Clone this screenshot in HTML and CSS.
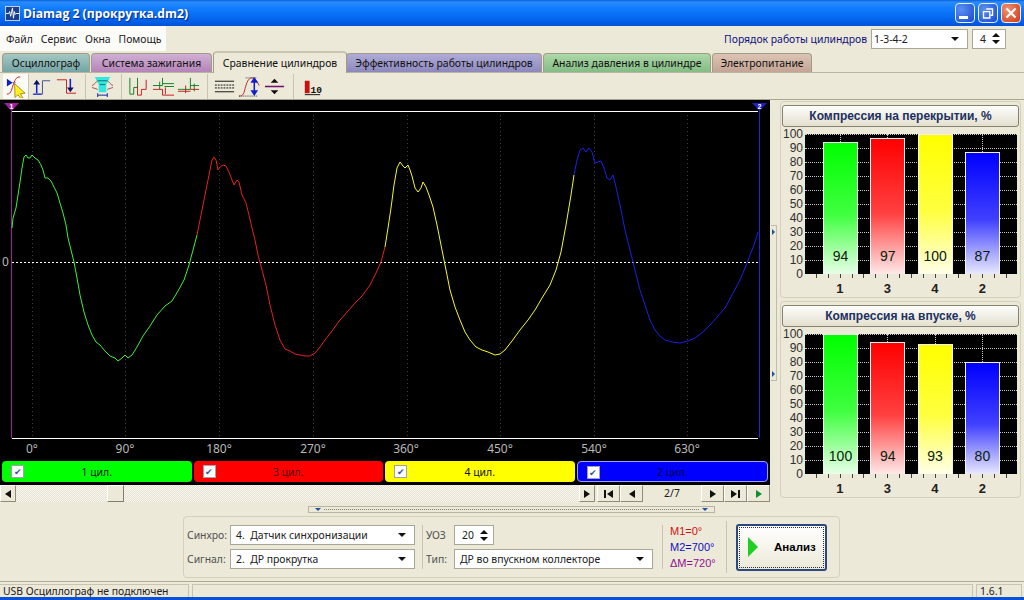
FILE: index.html
```html
<!DOCTYPE html>
<html lang="ru">
<head>
    <meta charset="UTF-8">
    <title>Diamag 2</title>
    <link rel="stylesheet" href="styles.css">
</head>
<body>
    <!-- заголовок окна -->
    <div class="titlebar">
        <svg class="app-icon" viewBox="0 0 16 16">
            <rect x="0.5" y="0.5" width="15" height="15" fill="#1a3f8f" stroke="#c8d8f0"/>
            <path d="M1 8h3l1-2 1 5 2-9 1 11 1-7 1 3 1-1h3" fill="none" stroke="#fff"/>
        </svg>
        <span class="title-text">Diamag 2 (прокрутка.dm2)</span>
        <div class="win-buttons">
            <div class="win-btn"><span class="win-min"></span></div>
            <div class="win-btn">
                <svg viewBox="0 0 20 20" width="20" height="20"><path d="M8 5.5h7v7h-2M5 8.5h7v7H5z" fill="none" stroke="#fff" stroke-width="1.5"/></svg>
            </div>
            <div class="win-btn win-close">
                <svg viewBox="0 0 20 20" width="20" height="20"><path d="M5 5l10 10M15 5L5 15" stroke="#fff" stroke-width="2.4"/></svg>
            </div>
        </div>
    </div>

    <!-- меню и порядок работы -->
    <div class="menu-row">
        <div class="menu">
            <span>Файл</span><span>Сервис</span><span>Окна</span><span>Помощь</span>
        </div>
        <div class="order">
            <span class="order-label">Порядок работы цилиндров</span>
            <div class="combo combo-order"><span>1-3-4-2</span><i class="arrow-down"></i></div>
            <div class="spin spin-order"><span>4</span><b class="spin-arrows"><i></i><i></i></b></div>
        </div>
    </div>

    <!-- вкладки -->
    <div class="tabs">
        <div class="tab tab-osc">Осциллограф</div>
        <div class="tab tab-ign">Система зажигания</div>
        <div class="tab tab-active">Сравнение цилиндров</div>
        <div class="tab tab-eff">Эффективность работы цилиндров</div>
        <div class="tab tab-press">Анализ давления в цилиндре</div>
        <div class="tab tab-power">Электропитание</div>
    </div>

    <!-- панель инструментов -->
    <div class="toolbar">
        <div class="tool-group">
            <div class="tool tool-pressed">
                <svg viewBox="0 0 24 24"><path d="M3 4v8l6-4z" fill="#1020c0"/><path d="M9 8h3" stroke="#1020c0" stroke-dasharray="1 1"/><path d="M3 20c5 0 5-6 7-11s3-7 7-7" fill="none" stroke="#c02020"/><path d="M11 9l11 10-5 .5 2.500 4-2 1-3-4-3 3z" fill="#fff020" stroke="#806000" stroke-width=".7"/></svg>
            </div>
        </div>
        <div class="tool-group">
            <div class="tool">
                <svg viewBox="0 0 24 24"><path d="M4 20h9V6h8" fill="none" stroke="#405090"/><path d="M7 19V9" stroke="#1020d0" stroke-width="1.6"/><path d="M3.500 10L7 5l3.500 5z" fill="#101060"/><path d="M3 20h9" stroke="#1020d0"/></svg>
            </div>
            <div class="tool">
                <svg viewBox="0 0 24 24"><path d="M2 5h10v14h10" fill="none" stroke="#c02020"/><path d="M16 4v10" stroke="#1020d0" stroke-width="1.6"/><path d="M12.500 13l3.500 5 3.500-5z" fill="#101060"/></svg>
            </div>
        </div>
        <div class="tool-group tool-group-next">
            <div class="tool">
                <svg viewBox="0 0 24 24"><path d="M4 2h16l-4 8v8H8v-8z" fill="#30e8e0"/><path d="M1 11c3-1 4-4 6-5M23 11c-3-1-4-4-6-5M1 13l6 2M23 13l-6 2" fill="none" stroke="#a05050"/><path d="M7 6h10M9 10h6" stroke="#107070"/><path d="M7 21h10M7 19v4M17 19v4" stroke="#1020a0"/></svg>
            </div>
        </div>
        <div class="tool-group tool-group-next">
            <div class="tool">
                <svg viewBox="0 0 24 24"><path d="M3 3v17h4v-7h4V3" fill="none" stroke="#108020"/><path d="M11 11v10h4v-6h5V5" fill="none" stroke="#c02020"/></svg>
            </div>
            <div class="tool">
                <svg viewBox="0 0 24 24"><path d="M1 11h10V3M11 9h12M8 7v8M13 12h10" fill="none" stroke="#108020"/><path d="M1 15h10v6h12M14 13v7" fill="none" stroke="#c02020"/></svg>
            </div>
            <div class="tool">
                <svg viewBox="0 0 24 24"><path d="M1 15h13V3M14 11h9M18 9v8" fill="none" stroke="#108020"/><path d="M1 17h13M9 11v8M14 15h9" fill="none" stroke="#c02020"/></svg>
            </div>
        </div>
        <div class="tool-group tool-group-next">
            <div class="tool">
                <svg viewBox="0 0 24 24"><path d="M2 6.500h20M2 17.500h20" stroke="#101010"/><path d="M2 10.500h20M2 13.500h20" stroke="#101010" stroke-dasharray="2 1"/></svg>
            </div>
            <div class="tool">
                <svg viewBox="0 0 24 24"><path d="M1 22c5 0 5-3 7-10s4-9 7-9 5 4 7 8" fill="none" stroke="#c02020"/><path d="M8 3h12M1 22h19" stroke="#404040" stroke-dasharray="1 1"/><path d="M17 6v12" stroke="#1020d0" stroke-width="1.6"/><path d="M13 8l4-6 4 6zM13 16l4 6 4-6z" fill="#1020d0"/></svg>
            </div>
            <div class="tool">
                <svg viewBox="0 0 24 24"><path d="M2 12h20" stroke="#701070" stroke-width="1.6"/><path d="M8 8l4-4 4 4zM8 16l4 4 4-4z" fill="#101010"/></svg>
            </div>
        </div>
        <div class="tool-group tool-group-last">
            <div class="tool">
                <svg viewBox="0 0 24 24"><rect x="5" y="6" width="5" height="13" fill="#c81010"/><path d="M5 20.500h16" stroke="#101010"/><text x="11" y="19" class="tool-num">10</text></svg>
            </div>
        </div>
    </div>

    <div class="workspace">
        <div class="scope-col">
            <!-- осциллограмма -->
            <svg class="plot" viewBox="0 100 770 359">
                <g class="grid-v">
                    <path d="M32.500 111V438M125.500 111V438M219.500 111V438M313.500 111V438M407.500 111V438M500.500 111V438M594.500 111V438M687.500 111V438"/>
                </g>
                <path d="M12 111.500H758M12 438.500H758" stroke="#fff" stroke-width="1" fill="none"/>
                <path d="M12 262.500H758" stroke="#fff" stroke-dasharray="2 2" fill="none"/>
                <path d="M11.500 104V438" stroke="#a020a0" fill="none"/>
                <path d="M759.500 104V438" stroke="#2020e0" fill="none"/>
                <path d="M4 103H19L11.500 111z" fill="#a020a0"/>
                <path d="M752 103H767L759.500 111z" fill="#2020c0"/>
                <text x="11.500" y="109" class="marker">1</text>
                <text x="759.500" y="109" class="marker">2</text>
                <text x="2" y="266" class="axis-text">0</text>
                <polyline class="trace" stroke="#3cf03c" points="12,228 13,218 16,208 18,195 20,182 22,168 24,157 26,155 28,158 30,158 32,155 35,158 38,160 41,165 43,170 45,178 48,178 51,181 54,187 57,193 60,203 63,213 66,225 68,238 71,250 74,262 77,278 80,295 84,312 88,325 92,335 96,342 100,345 105,351 110,356 115,358 118,361 122,358 125,355 128,358 132,355 137,347 143,336 150,326 157,315 165,306 172,301 178,291 184,280 189,265 193,250 197,235"/>
                <polyline class="trace" stroke="#e82020" points="197,235 200,220 203,205 206,190 209,175 212,160 214,157 216,160 218,170 220,167 223,165 226,166 229,172 232,180 234,185 237,180 239,182 242,195 246,203 249,215 252,228 255,240 258,255 262,270 266,285 270,305 275,325 280,340 285,349 290,351 295,354 300,355 305,356 310,356 315,353 320,347 325,340 332,331 340,320 348,311 355,303 362,296 370,285 376,273 381,262 385,247"/>
                <polyline class="trace" stroke="#f8f820" points="385,247 388,228 391,208 394,185 397,168 400,162 403,166 405,168 408,165 410,170 412,176 415,188 418,192 421,188 423,182 426,187 429,195 433,207 437,225 441,245 445,265 450,290 455,307 460,320 465,332 470,340 476,347 482,350 488,352 495,355 500,354 505,350 512,341 520,330 528,320 535,310 542,298 550,285 556,270 561,252 566,225 571,195 574,175"/>
                <polyline class="trace" stroke="#1c20e8" points="574,175 577,160 580,150 583,148 586,152 589,148 592,152 595,163 598,162 601,161 604,168 607,178 610,180 613,175 616,187 620,205 625,230 630,250 635,270 640,290 645,305 650,320 655,330 660,336 665,340 672,342 680,343 688,341 695,338 703,332 710,325 718,316 725,308 732,295 740,280 745,268 750,255 754,245 758,232"/>
                <g class="axis-text axis-deg">
                    <text x="32" y="453">0°</text>
                    <text x="125" y="453">90°</text>
                    <text x="219" y="453">180°</text>
                    <text x="313" y="453">270°</text>
                    <text x="406" y="453">360°</text>
                    <text x="500" y="453">450°</text>
                    <text x="594" y="453">540°</text>
                    <text x="687" y="453">630°</text>
                </g>
            </svg>

            <!-- цилиндры -->
            <div class="channels">
                <div class="channel ch-green"><span class="check">✔</span><span class="ch-name">1 цил.</span></div>
                <div class="channel ch-red"><span class="check">✔</span><span class="ch-name">3 цил.</span></div>
                <div class="channel ch-yellow"><span class="check">✔</span><span class="ch-name">4 цил.</span></div>
                <div class="channel ch-blue"><span class="check">✔</span><span class="ch-name">2 цил.</span></div>
            </div>

            <!-- прокрутка и навигация -->
            <div class="scroll-row">
                <div class="nav-btn nav-small"><i class="tri-left"></i></div>
                <div class="scroll-track"><div class="scroll-thumb"></div></div>
                <div class="nav-btn nav-small"><i class="tri-right"></i></div>
                <div class="nav-btn nav-gap"><i class="bar"></i><i class="tri-left"></i></div>
                <div class="nav-btn"><i class="tri-left"></i></div>
                <div class="page-num">2/7</div>
                <div class="nav-btn"><i class="tri-right"></i></div>
                <div class="nav-btn"><i class="tri-right"></i><i class="bar"></i></div>
                <div class="nav-btn"><i class="tri-right tri-green"></i></div>
            </div>
        </div>

        <div class="side-handle"><i class="tri-mini"></i><i class="tri-mini"></i></div>

        <!-- столбцы компрессии -->
        <div class="side-col">
            <div class="group-box">
                <div class="chart-title">Компрессия на перекрытии, %</div>
                <div class="chart-wrap">
                    <div class="axis-y"><span>100</span><span>90</span><span>80</span><span>70</span><span>60</span><span>50</span><span>40</span><span>30</span><span>20</span><span>10</span><span>0</span></div>
                    <div class="chart">
                        <div class="chart-grid"><i></i><i></i><i></i><i></i><i></i><i></i><i></i><i></i><i></i><i></i></div>
                        <div class="chart-bars">
                            <div class="slot"><div class="bar-col bar-green" style="height: 94%"><span>94</span></div></div>
                            <div class="slot"><div class="bar-col bar-red" style="height: 97%"><span>97</span></div></div>
                            <div class="slot"><div class="bar-col bar-yellow" style="height: 100%"><span>100</span></div></div>
                            <div class="slot"><div class="bar-col bar-blue" style="height: 87%"><span>87</span></div></div>
                        </div>
                    </div>
                </div>
                <div class="axis-x"><span>1</span><span>3</span><span>4</span><span>2</span></div>
            </div>
            <div class="group-box">
                <div class="chart-title">Компрессия на впуске, %</div>
                <div class="chart-wrap">
                    <div class="axis-y"><span>100</span><span>90</span><span>80</span><span>70</span><span>60</span><span>50</span><span>40</span><span>30</span><span>20</span><span>10</span><span>0</span></div>
                    <div class="chart">
                        <div class="chart-grid"><i></i><i></i><i></i><i></i><i></i><i></i><i></i><i></i><i></i><i></i></div>
                        <div class="chart-bars">
                            <div class="slot"><div class="bar-col bar-green" style="height: 100%"><span>100</span></div></div>
                            <div class="slot"><div class="bar-col bar-red" style="height: 94%"><span>94</span></div></div>
                            <div class="slot"><div class="bar-col bar-yellow" style="height: 93%"><span>93</span></div></div>
                            <div class="slot"><div class="bar-col bar-blue" style="height: 80%"><span>80</span></div></div>
                        </div>
                    </div>
                </div>
                <div class="axis-x"><span>1</span><span>3</span><span>4</span><span>2</span></div>
            </div>
        </div>
    </div>

    <div class="splitter"><i class="tri-mini-down"></i><span class="splitter-dots"></span><i class="tri-mini-down"></i></div>

    <!-- параметры анализа -->
    <div class="controls-row">
        <div class="controls">
            <div class="sel-col">
                <div class="field">
                    <label>Синхро:</label>
                    <div class="combo combo-sel"><span>4.&nbsp; Датчик синхронизации</span><i class="arrow-down"></i></div>
                </div>
                <div class="field">
                    <label>Сигнал:</label>
                    <div class="combo combo-sel"><span>2.&nbsp; ДР прокрутка</span><i class="arrow-down"></i></div>
                </div>
            </div>
            <div class="sel-col sel-col-second">
                <div class="field">
                    <label class="label-short">УОЗ</label>
                    <div class="spin spin-uoz"><span>20</span><b class="spin-arrows"><i></i><i></i></b></div>
                </div>
                <div class="field">
                    <label class="label-short">Тип:</label>
                    <div class="combo combo-type"><span>ДР во впускном коллекторе</span><i class="arrow-down"></i></div>
                </div>
            </div>
            <div class="markers">
                <span class="m1">M1=0°</span>
                <span class="m2">M2=700°</span>
                <span class="m3">ΔM=720°</span>
            </div>
            <div class="analyze-btn">
                <i class="analyze-tri"></i>
                <span>Анализ</span>
            </div>
        </div>
    </div>

    <!-- строка состояния -->
    <div class="statusbar">
        <div class="status-cell status-usb">USB Осциллограф не подключен</div>
        <div class="status-cell status-mid"></div>
        <div class="status-cell status-ver">1.6.1</div>
    </div>
</body>
</html>
```

FILE: styles.css
```css
* {
    box-sizing: border-box;
}

body {
    margin: 0;
    width: 1024px;
    height: 600px;
    overflow: hidden;
    display: flex;
    flex-direction: column;
    background: #ece9d8;
    color: #202020;
    font-family: "Noto Sans", sans-serif;
    font-size: 10.400px;
    border-bottom: 3px solid #0a50d8;
}

i {
    display: block;
}

/* заголовок окна */
.titlebar {
    height: 26px;
    flex: none;
    display: flex;
    align-items: center;
    padding: 0 3px 0 5px;
    background: linear-gradient(#0a60e0 0, #2a8cf8 8%, #127dff 30%, #0468f0 70%, #0058e0 92%, #0a50d8 100%);
}

.app-icon {
    width: 15px;
    height: 15px;
    margin-right: 3px;
}

.title-text {
    color: #fff;
    font-family: "Open Sans", sans-serif;
    font-weight: 700;
    font-size: 12.200px;
    text-shadow: 1px 1px 1px #0a2a80;
}

.win-buttons {
    margin-left: auto;
    display: flex;
    gap: 3px;
}

.win-btn {
    width: 20px;
    height: 20px;
    border: 1px solid #e8f0ff;
    border-radius: 4px;
    background: radial-gradient(circle at 30% 30%, #5a90f0, #1848d0);
    display: flex;
    align-items: center;
    justify-content: center;
}

.win-close {
    background: radial-gradient(circle at 30% 30%, #f09070, #d03810);
}

.win-min {
    width: 9px;
    height: 3px;
    background: #fff;
    margin: 9px 0 0 -4px;
}

/* меню */
.menu-row {
    height: 25px;
    flex: none;
    display: flex;
    align-items: center;
    justify-content: space-between;
}

.menu {
    width: 166px;
    height: 25px;
    background: #fbfbf8;
    display: flex;
    align-items: center;
    gap: 8px;
    padding-left: 6px;
}

.order {
    display: flex;
    align-items: center;
    padding-right: 18px;
}

.order-label {
    color: #101080;
    margin-right: 4px;
}

.combo {
    height: 20px;
    background: #fff;
    border: 1px solid #a8a898;
    display: flex;
    align-items: center;
    justify-content: space-between;
    padding: 0 8px 0 2px;
}

.combo-order {
    width: 97px;
}

.combo-sel {
    width: 185px;
    padding-left: 5px;
}

.combo-type {
    width: 199px;
    padding-left: 5px;
}

.arrow-down {
    width: 0;
    height: 0;
    border: 4px solid transparent;
    border-top: 4px solid #101010;
    border-bottom: 0;
}

.spin {
    height: 20px;
    background: #fff;
    border: 1px solid #a8a898;
    display: flex;
    align-items: center;
    justify-content: space-between;
    padding: 0 5px 0 7px;
}

.spin-order {
    width: 34px;
    margin-left: 4px;
}

.spin-uoz {
    width: 40px;
}

.spin-arrows {
    display: flex;
    flex-direction: column;
    gap: 3px;
}

.spin-arrows i {
    width: 0;
    height: 0;
    border: 4px solid transparent;
    border-bottom: 4px solid #101010;
    border-top: 0;
}

.spin-arrows i:last-child {
    border-top: 4px solid #101010;
    border-bottom: 0;
}

/* вкладки */
.tabs {
    height: 22px;
    flex: none;
    display: flex;
    align-items: flex-end;
    padding-left: 2px;
    border-bottom: 1px solid #b8b4a0;
}

.tab {
    height: 19px;
    display: flex;
    align-items: center;
    justify-content: center;
    border: 1px solid #a09c88;
    border-bottom: 0;
    border-radius: 4px 4px 0 0;
    margin-right: 1px;
    color: #101010;
}

.tab-osc {
    width: 88px;
    background: linear-gradient(#a4c8c4, #74a4a4);
}

.tab-ign {
    width: 121px;
    background: linear-gradient(#d0b0d4, #b484b8);
}

.tab-active {
    width: 134px;
    height: 22px;
    margin: 0 -1px 0 0;
    background: #ece9d8;
    position: relative;
    top: 1px;
    border-top: 2px solid #c8c4b0;
}

.tab-eff {
    width: 196px;
    background: linear-gradient(#b0acd8, #8c88bc);
}

.tab-press {
    width: 168px;
    background: linear-gradient(#acd8a8, #84bc84);
}

.tab-power {
    width: 100px;
    background: linear-gradient(#dcc4b4, #c4a494);
}

/* инструменты */
.toolbar {
    height: 27px;
    flex: none;
    display: flex;
    align-items: center;
    padding-left: 3px;
    border-bottom: 1px solid #a8a490;
}

.tool-group {
    display: flex;
    height: 25px;
    padding-right: 6px;
    border-right: 1px solid #c8c4b0;
}

.tool-group:first-child {
    padding-right: 0;
    margin-right: 0;
}

.tool-group-next {
    margin-left: 4px;
}

.tool-group-last {
    margin-left: 5px;
    border-right: 0;
}

.tool {
    width: 25px;
    height: 25px;
    padding: 1px;
}

.tool svg {
    display: block;
    width: 23px;
    height: 23px;
}

.tool-pressed {
    background: #fbfaf4;
}

.tool-num {
    font-family: "Liberation Mono", monospace;
    font-weight: 700;
    font-size: 10px;
    fill: #101010;
}

/* рабочая область */
.workspace {
    height: 403px;
    flex: none;
    display: flex;
}

.scope-col {
    width: 770px;
    display: flex;
    flex-direction: column;
}

.plot {
    display: block;
    width: 770px;
    height: 359px;
    background: #000;
}

.grid-v path {
    stroke: #3c3c3c;
    stroke-dasharray: 1 3;
    fill: none;
}

.marker {
    fill: #fff;
    font-family: "Liberation Sans", sans-serif;
    font-size: 7px;
    font-weight: 700;
    text-anchor: middle;
}

.axis-text {
    fill: #b8b8b8;
    font-family: "Noto Sans", sans-serif;
    font-size: 12px;
}

.axis-deg {
    text-anchor: middle;
}

.trace {
    fill: none;
    stroke-width: 1;
}

/* цилиндры */
.channels {
    height: 26px;
    flex: none;
    display: flex;
    gap: 2px;
    padding: 2px 2px 3px;
    background: #000;
}

.channel {
    flex: 1;
    position: relative;
    border-radius: 4px;
    display: flex;
    align-items: center;
    justify-content: center;
    color: #101010;
}

.ch-green {
    background: #00ff00;
}

.ch-red {
    background: #ff0000;
    color: #500000;
}

.ch-yellow {
    background: #ffff00;
}

.ch-blue {
    background: #0000ff;
    border: 1px solid #a0a0f0;
    color: #000050;
}

.check {
    position: absolute;
    left: 9px;
    top: 4px;
    width: 13px;
    height: 13px;
    background: #fff;
    border: 1px solid #a0a0b0;
    color: #3858a0;
    font-size: 9px;
    line-height: 11px;
    text-align: center;
}

/* прокрутка */
.scroll-row {
    height: 17px;
    flex: none;
    display: flex;
}

.scroll-track {
    flex: 1;
    padding-left: 91px;
    background: repeating-conic-gradient(#f8f6ee 0 25%, #e6e3d4 0 50%) 0 0 / 2px 2px;
}

.scroll-thumb {
    width: 17px;
    height: 17px;
    background: #ece9d8;
    border: 1px solid;
    border-color: #fff #808070 #808070 #fff;
}

.nav-btn {
    width: 23px;
    height: 17px;
    display: flex;
    align-items: center;
    justify-content: center;
    gap: 1px;
    background: #ece9d8;
    border: 1px solid;
    border-color: #fff #908c78 #908c78 #fff;
}

.nav-small {
    width: 16px;
}

.nav-gap {
    margin-left: 2px;
}

.page-num {
    width: 58px;
    text-align: center;
    line-height: 17px;
}

.tri-left,
.tri-right {
    width: 0;
    height: 0;
    border: 4px solid transparent;
    border-left: 0;
    border-right: 6px solid #101010;
}

.tri-right {
    border-right: 0;
    border-left: 6px solid #101010;
}

.tri-green {
    border-left-color: #109030;
}

.bar {
    width: 2px;
    height: 8px;
    background: #101010;
}

/* ручка боковой панели */
.side-handle {
    width: 6px;
    height: 156px;
    margin: 125px 0 0 1px;
    display: flex;
    flex-direction: column;
    justify-content: space-between;
    padding: 3px 0;
    border: 1px solid #c0bca8;
    border-left: 0;
}

.tri-mini {
    width: 0;
    height: 0;
    border: 3px solid transparent;
    border-right: 0;
    border-left: 3px solid #2050a0;
    margin-left: 1px;
}

/* столбцы */
.side-col {
    width: 241px;
    margin-left: 3px;
    padding-top: 1px;
    display: flex;
    flex-direction: column;
    gap: 3px;
}

.group-box {
    height: 197px;
    border: 1px solid #d4d0bc;
    border-radius: 4px;
    padding: 3px 1px 0;
}

.chart-title {
    height: 22px;
    border: 1px solid #85826e;
    border-radius: 3px;
    background: linear-gradient(#fdfdfb, #e4e0cf);
    color: #203060;
    font-family: "Liberation Sans", sans-serif;
    font-weight: 700;
    font-size: 12px;
    line-height: 20px;
    text-align: center;
}

.chart-wrap {
    display: flex;
    margin-top: 7px;
}

.axis-y {
    width: 23px;
    height: 140px;
    display: flex;
    flex-direction: column;
    margin-top: -7px;
    padding-right: 2px;
    text-align: right;
    font-family: "Liberation Sans", sans-serif;
    font-size: 12px;
    color: #303030;
}

.axis-y span {
    flex: none;
    height: 14px;
    line-height: 14px;
}

.chart {
    position: relative;
    width: 212px;
    height: 140px;
    background: #000;
}

.chart-grid {
    position: absolute;
    inset: 0;
    display: flex;
    flex-direction: column;
}

.chart-grid i {
    flex: 1;
    border-top: 1px dotted #c8c8c8;
}

.chart-bars {
    position: relative;
    height: 100%;
    display: flex;
    gap: 12.300px;
    padding-left: 18px;
}

.slot {
    position: relative;
    width: 35px;
    height: 100%;
    display: flex;
    align-items: flex-end;
}

.slot::before {
    content: '';
    position: absolute;
    left: 17px;
    top: 0;
    bottom: 0;
    border-left: 1px dotted #c8c8c8;
}

.bar-col {
    position: relative;
    width: 100%;
    border: 1px solid #f0f0f0;
    border-bottom: 0;
    display: flex;
    align-items: flex-end;
    justify-content: center;
    font-family: "Liberation Sans", sans-serif;
    font-size: 14px;
    color: #0a200a;
    padding-bottom: 10px;
}

.bar-green {
    background: linear-gradient(#00ff00, #40ff40 55%, #e8ffe8);
}

.bar-red {
    background: linear-gradient(#ff0000, #ff4040 55%, #ffe8e8);
}

.bar-yellow {
    background: linear-gradient(#ffff00, #ffff40 55%, #ffffe8);
}

.bar-blue {
    background: linear-gradient(#0000ff, #4040ff 55%, #e8e8ff);
}

.axis-x {
    display: flex;
    width: 191px;
    height: 28px;
    margin-left: 34px;
    background: repeating-linear-gradient(to right, #404040 0 1px, transparent 1px 11.850px) 0 0 / 100% 4px no-repeat;
    font-family: "Liberation Sans", sans-serif;
    font-weight: 700;
    font-size: 13px;
    line-height: 30px;
}

.axis-x span {
    width: 47.500px;
    text-align: center;
}

/* разделитель */
.splitter {
    height: 7px;
    width: 407px;
    margin: 3px 0 0 308px;
    flex: none;
    display: flex;
    align-items: center;
    gap: 3px;
    padding: 0 6px;
    border: 1px solid #b8b4a0;
}

.splitter-dots {
    flex: 1;
    border-top: 1px dotted #808070;
}

.tri-mini-down {
    width: 0;
    height: 0;
    border: 3px solid transparent;
    border-top: 3px solid #2050a0;
    border-bottom: 0;
}

/* параметры */
.controls-row {
    flex: none;
    padding: 3px 0 0 183px;
}

.controls {
    width: 657px;
    height: 62px;
    border: 1px solid #d4d0bc;
    border-radius: 4px;
    display: flex;
    align-items: center;
    padding: 0 0 0 3px;
}

.sel-col {
    display: flex;
    flex-direction: column;
    gap: 4px;
    padding-right: 7px;
    border-right: 1px solid #c8c4b0;
}

.sel-col-second {
    padding: 0 9px 0 3px;
}

.field {
    display: flex;
    align-items: center;
}

.field label {
    width: 43px;
    color: #505050;
}

.field .label-short {
    width: 28px;
}

.markers {
    width: 64px;
    height: 52px;
    padding-left: 7px;
    display: flex;
    flex-direction: column;
    justify-content: center;
    gap: 4px;
    border-right: 1px solid #c8c4b0;
    font-family: "Liberation Sans", sans-serif;
    font-size: 11px;
    white-space: nowrap;
}

.m1 {
    color: #d01010;
}

.m2 {
    color: #1010c0;
}

.m3 {
    color: #901090;
}

.analyze-btn {
    width: 91px;
    height: 47px;
    margin-left: 9px;
    display: flex;
    align-items: center;
    gap: 16px;
    padding-left: 10px;
    border: 2px solid #2a4880;
    border-radius: 3px;
    outline: 1px dotted #303030;
    outline-offset: -4px;
    background: linear-gradient(#fff, #ece9d8);
    font-family: "Liberation Sans", sans-serif;
    font-weight: 700;
    font-size: 11.500px;
    color: #000;
}

.analyze-tri {
    width: 0;
    height: 0;
    border: 10px solid transparent;
    border-right: 0;
    border-left: 10px solid #20d020;
}

/* строка состояния */
.statusbar {
    flex: 1;
    margin-top: 3px;
    display: flex;
    gap: 3px;
    padding: 2px 2px 0 0;
    border-top: 1px solid #b0ac98;
}

.status-cell {
    border: 1px solid #c8c4b0;
    border-bottom: 0;
    line-height: 13px;
    padding-left: 3px;
}

.status-usb {
    width: 189px;
    border-left: 0;
}

.status-mid {
    flex: 1;
}

.status-ver {
    width: 46px;
}
```
